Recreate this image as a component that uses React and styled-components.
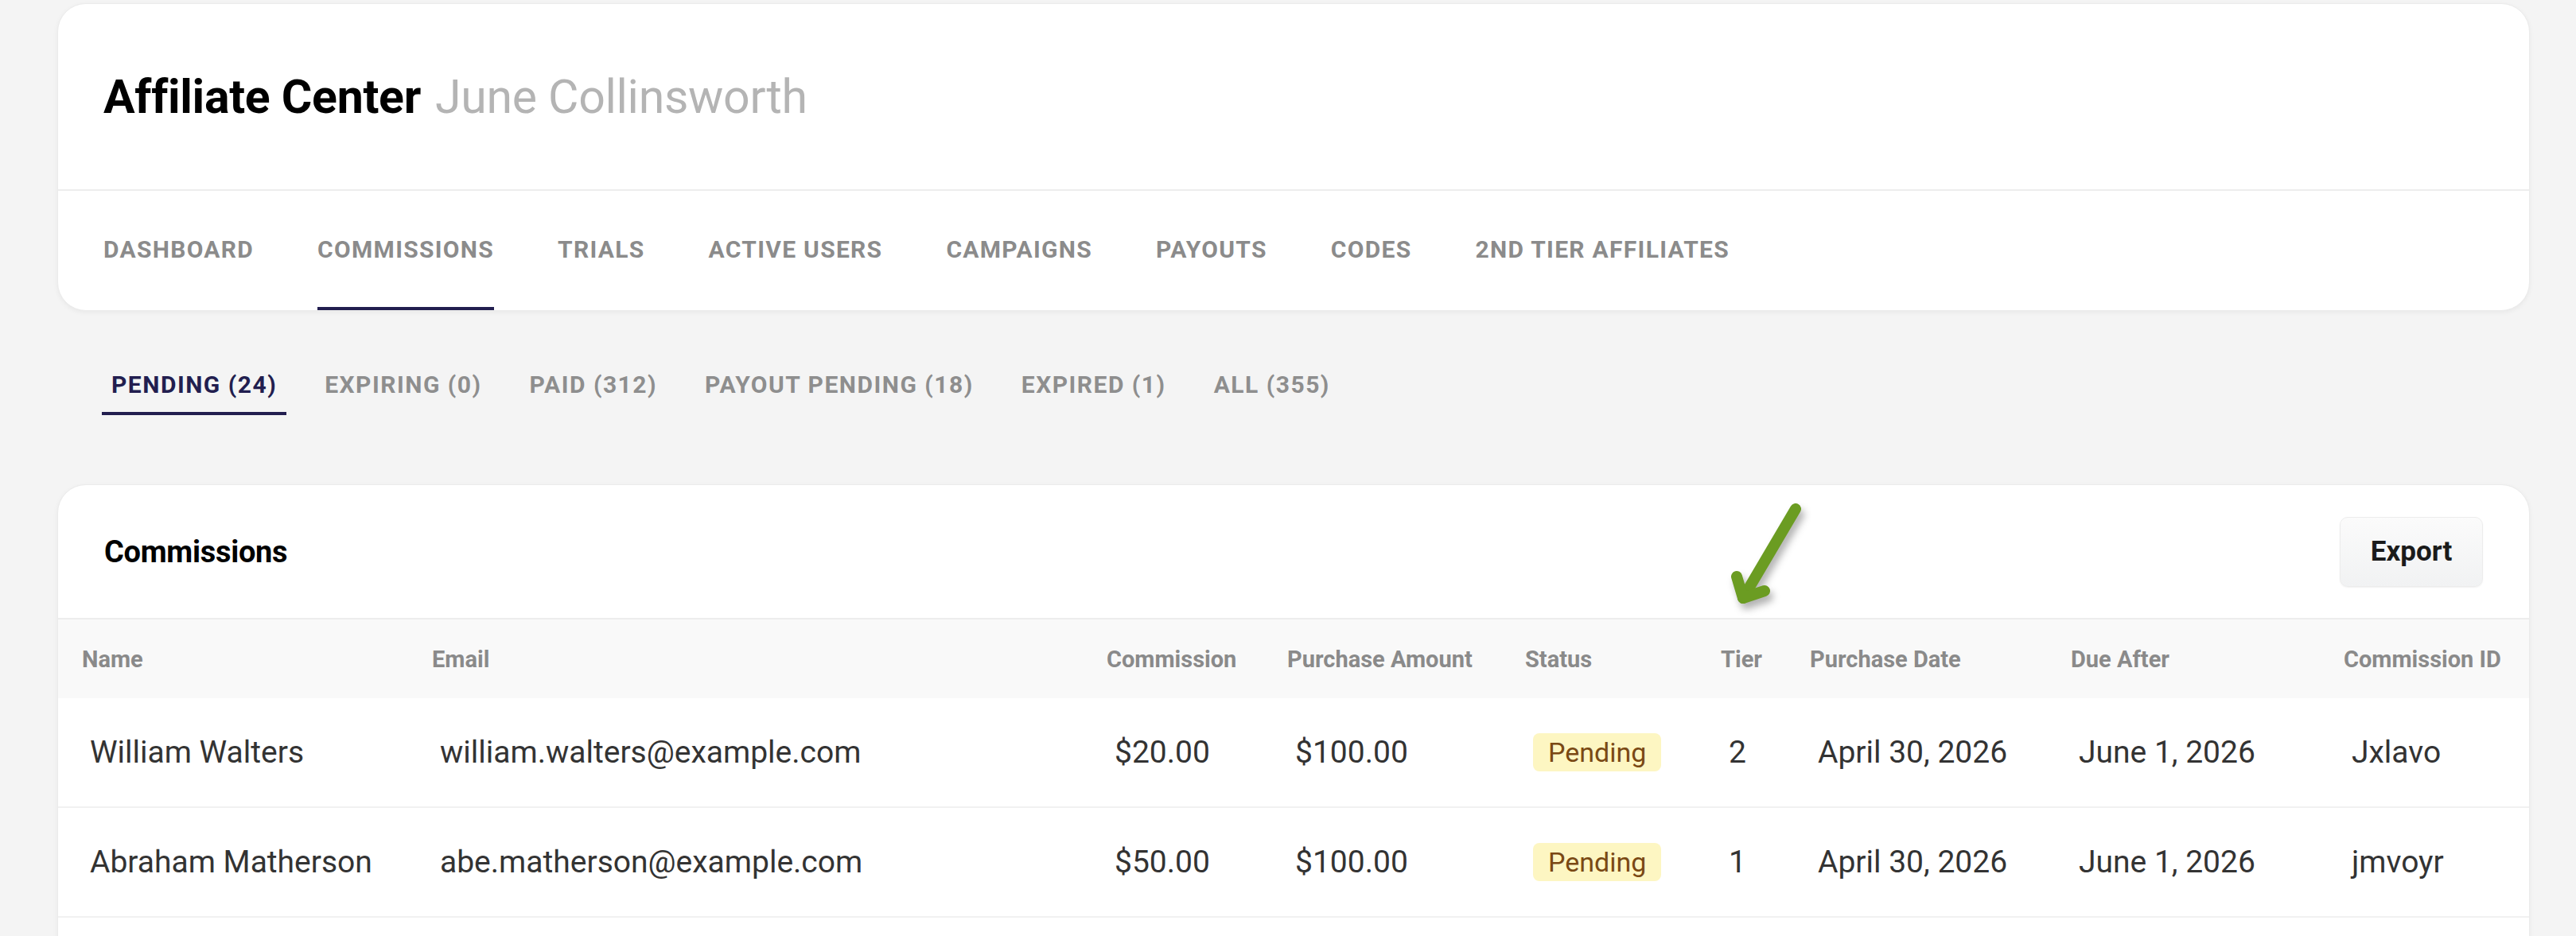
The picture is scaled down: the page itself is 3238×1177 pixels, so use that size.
import styled, { createGlobalStyle } from "styled-components";

const GlobalStyle = createGlobalStyle`
  body {
    margin: 0;
    background: #f4f4f4;
    font-family: Roboto, "Liberation Sans", sans-serif;
    color: #333333;
  }
`;

const navItems = ["Dashboard", "Commissions", "Trials", "Active Users", "Campaigns", "Payouts", "Codes", "2nd Tier Affiliates"];

const filters = [
    { label: "Pending", count: 24, active: true },
    { label: "Expiring", count: 0 },
    { label: "Paid", count: 312 },
    { label: "Payout Pending", count: 18 },
    { label: "Expired", count: 1 },
    { label: "All", count: 355 },
];

const columns = [
    { title: "Name", width: 440 },
    { title: "Email", width: 848 },
    { title: "Commission", width: 227 },
    { title: "Purchase Amount", width: 299 },
    { title: "Status", width: 246 },
    { title: "Tier", width: 112 },
    { title: "Purchase Date", width: 328 },
    { title: "Due After", width: 343 },
    { title: "Commission ID", width: 265 },
];

const commissions = [
    { name: "William Walters", email: "william.walters@example.com", commission: 20, amount: 100, status: "Pending", tier: 2, date: "April 30, 2026", due: "June 1, 2026", id: "Jxlavo" },
    { name: "Abraham Matherson", email: "abe.matherson@example.com", commission: 50, amount: 100, status: "Pending", tier: 1, date: "April 30, 2026", due: "June 1, 2026", id: "jmvoyr" },
];

export default function App() {
    return (
        <>
            <GlobalStyle />
            <Page>
                <Card>
                    <CardHeader>
                        <Title>Affiliate Center<UserName>June Collinsworth</UserName></Title>
                    </CardHeader>
                    <Nav>
                        {navItems.map(item => (
                            <NavTab key={item} $active={item === "Commissions"}>{item}</NavTab>
                        ))}
                    </Nav>
                </Card>

                <Filters>
                    {filters.map(({ label, count, active }) => (
                        <FilterTab key={label} $active={active}>{label} ({count})</FilterTab>
                    ))}
                </Filters>

                <TableCard>
                    <TableHeader>
                        <CardTitle>Commissions</CardTitle>
                        <ExportButton>Export</ExportButton>
                    </TableHeader>

                    <Arrow width="120" height="150" viewBox="0 0 120 150">
                        <g fill="none" stroke="#6b9c22" strokeWidth="14" strokeLinecap="round" strokeLinejoin="round">
                            <path d="M96 16 L30 128" />
                            <path d="M22 101 L30 128 L57 119" />
                        </g>
                    </Arrow>

                    <Table>
                        <colgroup>
                            {columns.map(col => <col key={col.title} style={{ width: col.width }} />)}
                        </colgroup>
                        <thead>
                            <tr>
                                {columns.map(col => <Th key={col.title}>{col.title}</Th>)}
                            </tr>
                        </thead>
                        <tbody>
                            {commissions.map((row, i) => (
                                <Row key={i}>
                                    <Td>{row.name}</Td>
                                    <Td>{row.email}</Td>
                                    <Td>${row.commission.toFixed(2)}</Td>
                                    <Td>${row.amount.toFixed(2)}</Td>
                                    <Td><Badge>{row.status}</Badge></Td>
                                    <Td>{row.tier}</Td>
                                    <Td>{row.date}</Td>
                                    <Td>{row.due}</Td>
                                    <Td>{row.id}</Td>
                                </Row>
                            ))}
                        </tbody>
                    </Table>
                    <TableFoot />
                </TableCard>
            </Page>
        </>
    )
}

const Page = styled.div`
padding: 4px 58px 0 72px;
`

const Card = styled.div`
background: #ffffff;
border: 1px solid #ebebeb;
border-radius: 36px;
box-shadow: 0 2px 6px rgba(0, 0, 0, 0.05);
overflow: hidden;
`

const CardHeader = styled.div`
height: 233px;
display: flex;
align-items: center;
padding: 0 57px;
border-bottom: 2px solid #ededed;
`

const Title = styled.h1`
margin: 0;
font-size: 59px;
font-weight: 700;
color: #000000;
letter-spacing: -0.3px;
`

const UserName = styled.span`
margin-left: 18px;
font-weight: 400;
color: #b4b4b4;
letter-spacing: -0.3px;
`

const Nav = styled.nav`
display: flex;
gap: 80px;
height: 150px;
padding: 0 57px;
`

const NavTab = styled.div`
display: flex;
align-items: center;
height: 100%;
box-sizing: border-box;
border-bottom: 4px solid ${props => props.$active ? "#221e4f" : "transparent"};
font-size: 30px;
font-weight: 700;
letter-spacing: 1.3px;
text-transform: uppercase;
color: #8b8b8b;
`

const Filters = styled.div`
display: flex;
gap: 36px;
margin: 57px 0 0 56px;
`

const FilterTab = styled.div`
display: flex;
align-items: center;
height: 74px;
box-sizing: border-box;
padding: 0 12px;
border-bottom: 4px solid ${props => props.$active ? "#221e4f" : "transparent"};
font-size: 30px;
font-weight: 700;
letter-spacing: 1.5px;
text-transform: uppercase;
color: ${props => props.$active ? "#221e4f" : "#8e8e8e"};
`

const TableCard = styled.div`
position: relative;
margin-top: 87px;
background: #ffffff;
border: 1px solid #ebebeb;
border-radius: 36px;
box-shadow: 0 2px 6px rgba(0, 0, 0, 0.05);
overflow: hidden;
`

const TableHeader = styled.div`
height: 167px;
display: flex;
align-items: center;
justify-content: space-between;
padding: 0 58px;
border-bottom: 2px solid #ededed;
`

const CardTitle = styled.h2`
margin: 0;
font-size: 38px;
font-weight: 700;
color: #000000;
letter-spacing: -0.3px;
`

const ExportButton = styled.button`
width: 180px;
height: 88px;
border: 1px solid #ececec;
border-radius: 10px;
background: linear-gradient(#fbfbfb, #f1f2f3);
box-shadow: 0 1px 2px rgba(0, 0, 0, 0.06);
font-family: inherit;
font-size: 35px;
font-weight: 700;
color: #1b1b1b;
`

const Arrow = styled.svg`
position: absolute;
left: 2088px;
top: 14px;
filter: drop-shadow(4px 7px 5px rgba(0, 0, 0, 0.3));
`

const Table = styled.table`
width: 100%;
table-layout: fixed;
border-collapse: collapse;
`

const Th = styled.th`
height: 99px;
padding: 0 0 0 30px;
background: #f9f9f9;
text-align: left;
font-size: 29px;
font-weight: 700;
color: #8a8a8a;
white-space: nowrap;
`

const Row = styled.tr`
border-bottom: 2px solid #f1f1f1;
`

const Td = styled.td`
height: 136px;
padding: 0 0 0 40px;
font-size: 39px;
color: #333333;
white-space: nowrap;
`

const Badge = styled.span`
display: inline-block;
padding: 0 19px;
line-height: 48px;
border-radius: 8px;
background: #fdf6c2;
color: #7a4914;
font-size: 34px;
`

const TableFoot = styled.div`
height: 160px;
`
